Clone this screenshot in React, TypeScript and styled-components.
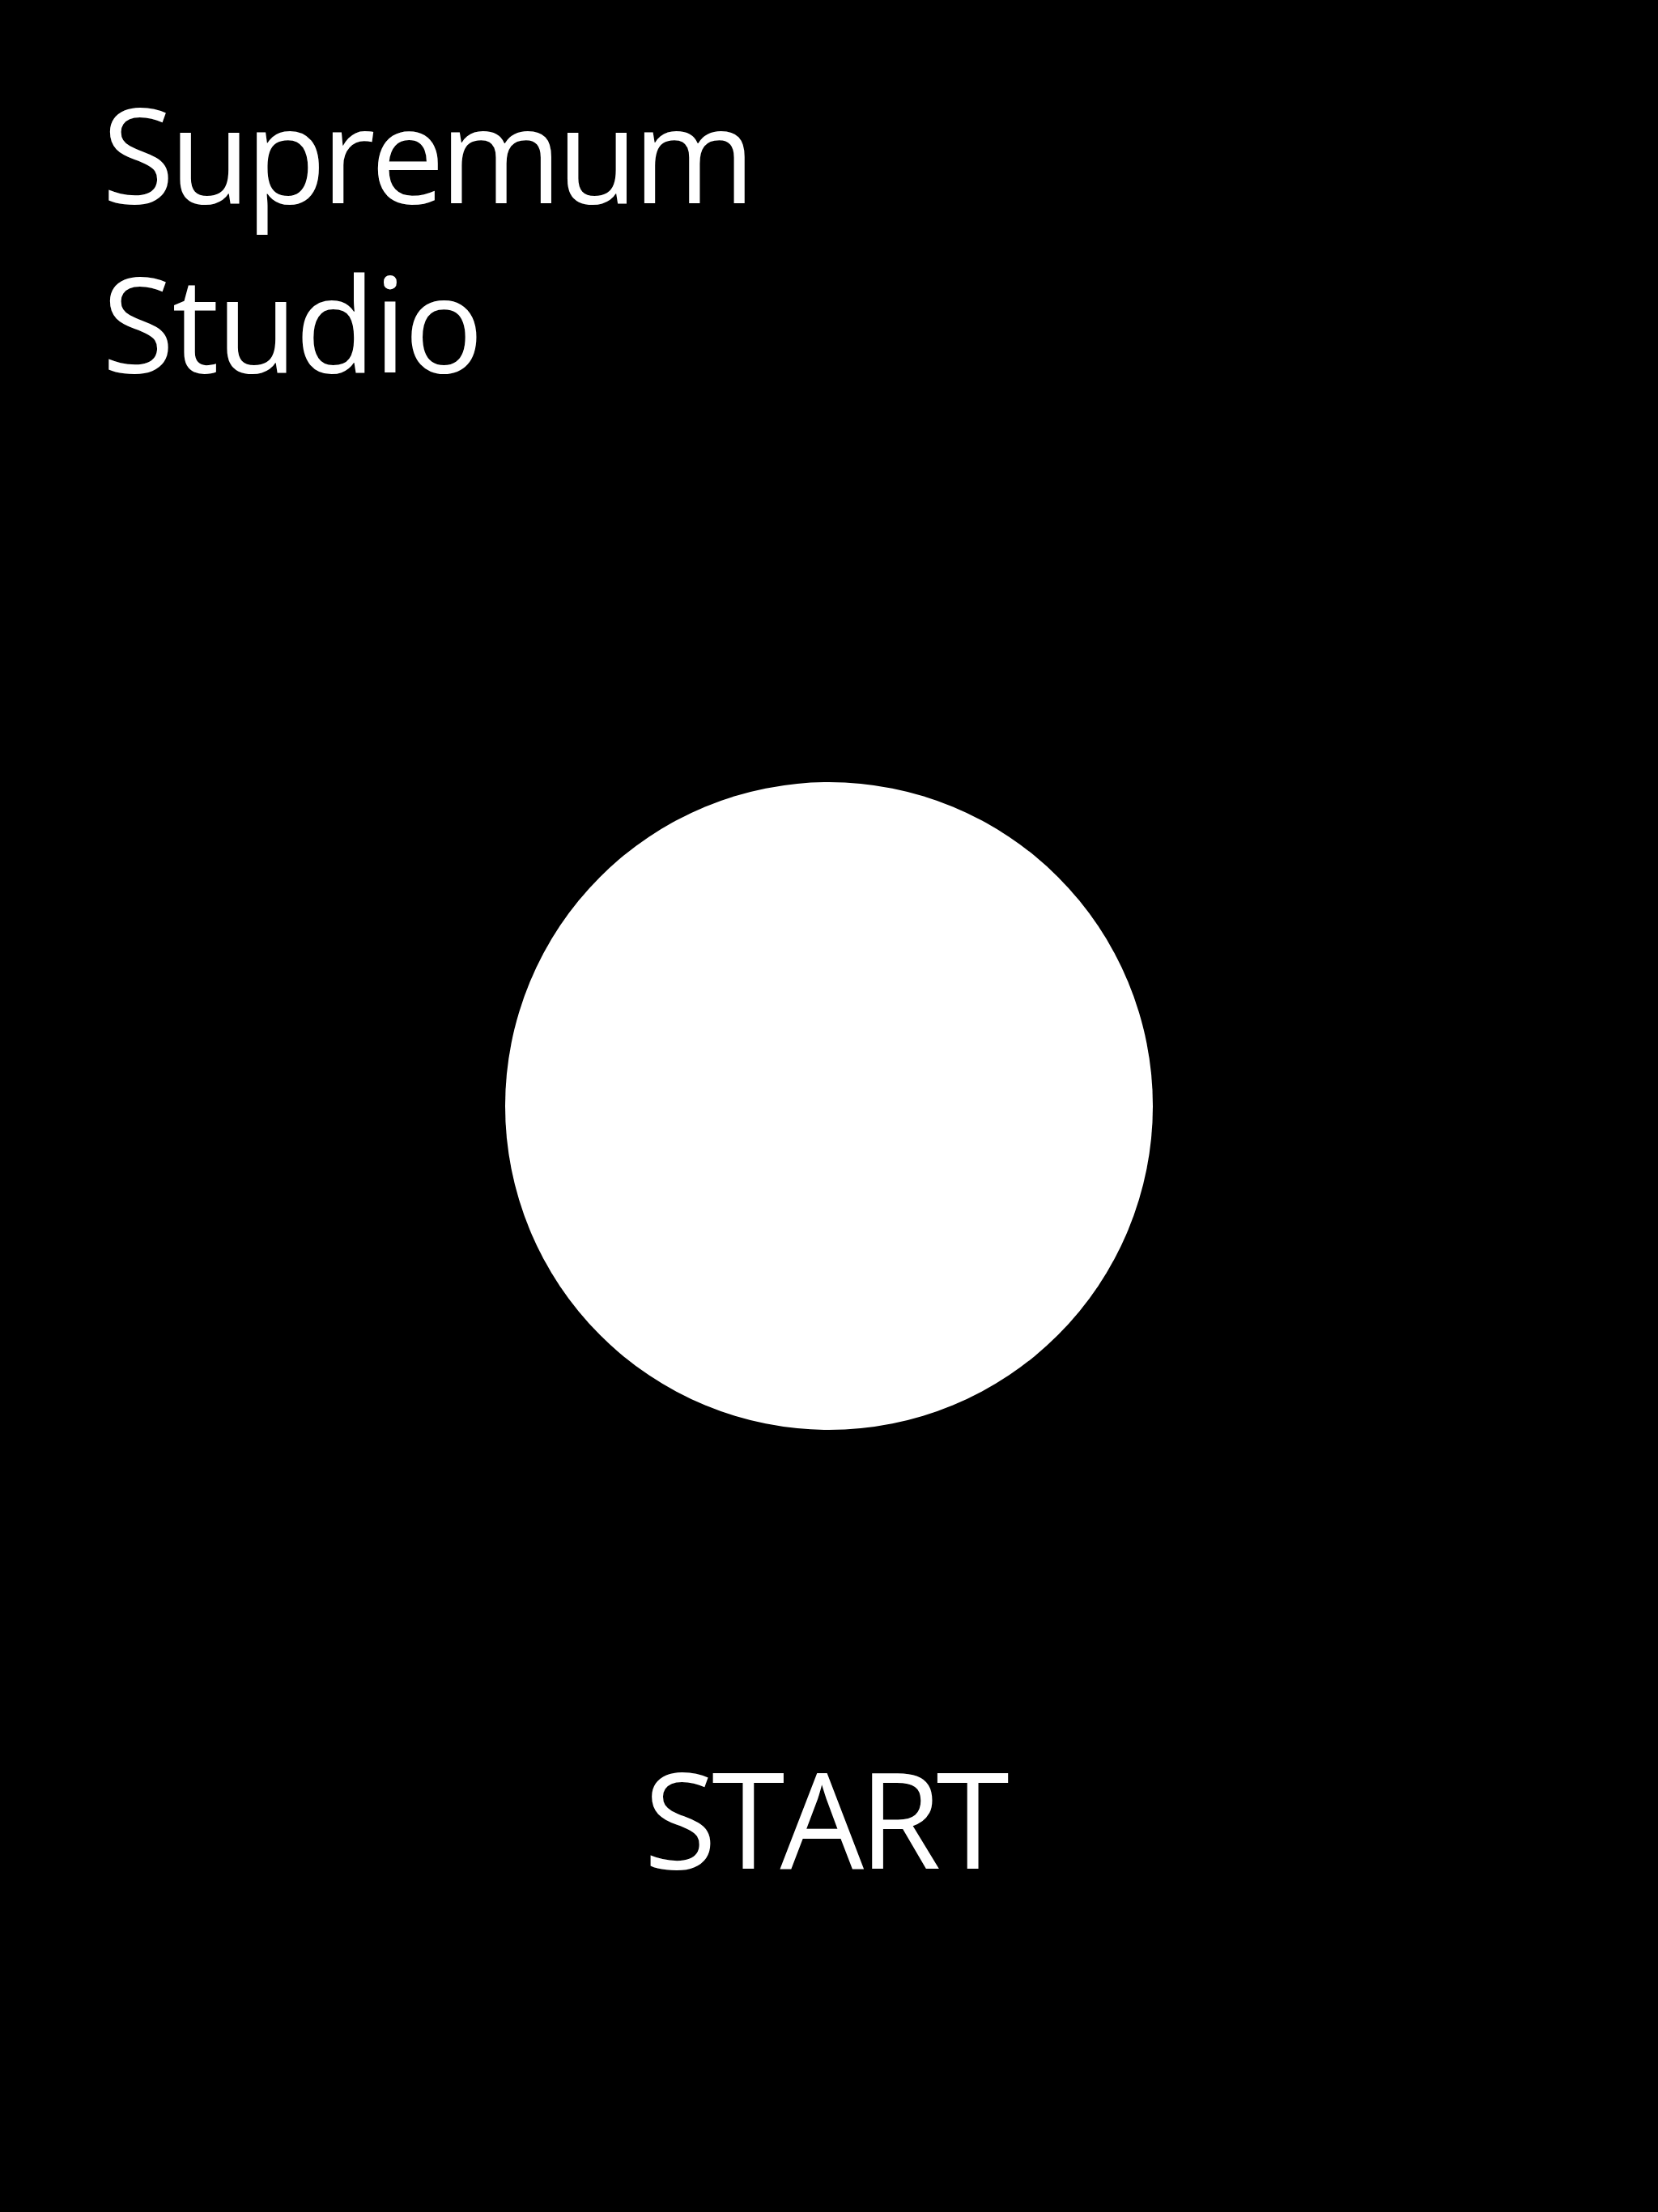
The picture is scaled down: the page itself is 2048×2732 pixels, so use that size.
import React from "react";
import styled, { createGlobalStyle } from "styled-components";

const GlobalStyle = createGlobalStyle`
  html, body {
    margin: 0;
    padding: 0;
    background: #000000;
  }
  body {
    font-family: "Open Sans", "Noto Sans", "Liberation Sans", sans-serif;
    color: #ffffff;
  }
`;

const Screen = styled.main`
  display: grid;
  grid-template-columns: 1fr;
  grid-template-rows: 1fr;
  width: 100%;
  height: 2732px;
  background: #000000;
  overflow: hidden;
`;

const Layer = styled.div<{ $align: "start" | "center" | "end" }>`
  grid-area: 1 / 1;
  display: flex;
  flex-direction: column;
  align-items: ${(p) => (p.$align === "start" ? "flex-start" : "center")};
  justify-content: ${(p) =>
    p.$align === "start" ? "flex-start" : p.$align === "center" ? "center" : "flex-end"};
`;

const TitleBlock = styled.h1`
  margin: 0;
  padding: 84px 0 0 126px;
  font-family: "Open Sans", "Noto Sans", sans-serif;
  font-weight: 400;
  font-size: 163px;
  line-height: 209px;
  letter-spacing: -6px;
  color: #ffffff;
`;

const Line = styled.span<{ $spacing?: number }>`
  display: block;
  letter-spacing: ${(p) => (p.$spacing !== undefined ? `${p.$spacing}px` : "inherit")};
`;

const Orb = styled.button`
  width: 800px;
  height: 800px;
  border: none;
  border-radius: 50%;
  background: #ffffff;
  padding: 0;
  cursor: pointer;
`;

const StartLabel = styled.div`
  margin: 0 0 405px 0;
  font-family: "Open Sans", "Noto Sans", sans-serif;
  font-weight: 400;
  font-size: 164px;
  line-height: 164px;
  letter-spacing: -6px;
  padding-right: 12px;
  color: #ffffff;
  text-align: center;
`;

export default function App() {
  return (
    <>
      <GlobalStyle />
      <Screen>
        <Layer $align="start">
          <TitleBlock>
            <Line>Supremum</Line>
            <Line $spacing={-3}>Studio</Line>
          </TitleBlock>
        </Layer>
        <Layer $align="center">
          <Orb aria-label="Start" />
        </Layer>
        <Layer $align="end">
          <StartLabel>START</StartLabel>
        </Layer>
      </Screen>
    </>
  );
}
